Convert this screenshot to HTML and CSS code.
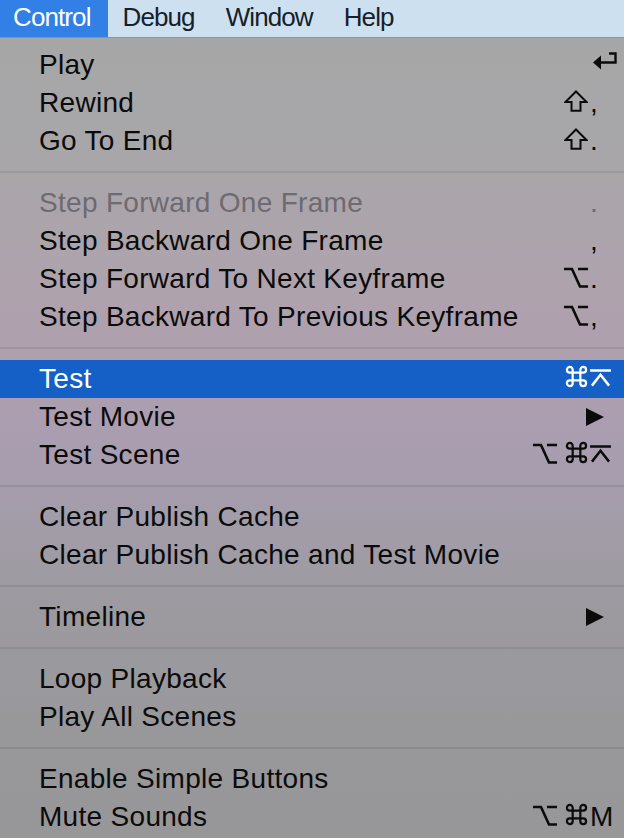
FILE: index.html
```html
<!DOCTYPE html>
<html>
	<head>
		<title>Control menu</title>
		<link rel="stylesheet" href="styles.css">
	</head>
	<body>
	<svg class="defs" width="0" height="0">
		<symbol id="ret" viewBox="0 0 24 18"><path d="M16 1.5 H22.5 V10.5 H6" fill="none" stroke="currentColor" stroke-width="2.4"/><path d="M0 10.5 L8 3.5 V17.5 Z" fill="currentColor"/></symbol>
		<symbol id="shift" viewBox="0 0 24 22"><path d="M12 1.5 L22.5 12 H16.5 V20.8 H7.5 V12 H1.5 Z" fill="none" stroke="currentColor" stroke-width="2" stroke-linejoin="miter"/></symbol>
		<symbol id="opt" viewBox="0 0 24 21"><path d="M0 2 H8 L16 19.5 H24 M14 2 H24" fill="none" stroke="currentColor" stroke-width="2.6"/></symbol>
		<symbol id="cmd" viewBox="0 0 24 24"><path d="M8 8 H16 V16 H8 Z M8 8 V5 A3 3 0 1 0 5 8 H8 M16 8 V5 A3 3 0 1 1 19 8 H16 M16 16 V19 A3 3 0 1 0 19 16 H16 M8 16 V19 A3 3 0 1 1 5 16 H8" fill="none" stroke="currentColor" stroke-width="2.3"/></symbol>
		<symbol id="enter" viewBox="0 0 22 20"><path d="M0 1.5 H22 M2 17.5 L11 6 L20 17.5" fill="none" stroke="currentColor" stroke-width="2.6"/></symbol>
		<symbol id="arrow" viewBox="0 0 18 18"><path d="M0 0 L18 9 L0 18 Z" fill="currentColor"/></symbol>
	</svg>

	<div class="menubar">
		<span class="top-item active">Control</span>
		<span class="top-item">Debug</span>
		<span class="top-item">Window</span>
		<span class="top-item">Help</span>
	</div>

	<div class="menu">
		<div class="row"><span class="label">Play</span><span class="mods"></span><span class="key"><svg class="i-ret"><use href="#ret"/></svg></span></div>
		<div class="row"><span class="label">Rewind</span><span class="mods"><svg class="i-shift"><use href="#shift"/></svg></span><span class="key">,</span></div>
		<div class="row"><span class="label">Go To End</span><span class="mods"><svg class="i-shift"><use href="#shift"/></svg></span><span class="key">.</span></div>
		<div class="sep"></div>
		<div class="row disabled"><span class="label">Step Forward One Frame</span><span class="mods"></span><span class="key">.</span></div>
		<div class="row"><span class="label">Step Backward One Frame</span><span class="mods"></span><span class="key">,</span></div>
		<div class="row"><span class="label">Step Forward To Next Keyframe</span><span class="mods"><svg class="i-opt"><use href="#opt"/></svg></span><span class="key">.</span></div>
		<div class="row"><span class="label">Step Backward To Previous Keyframe</span><span class="mods"><svg class="i-opt"><use href="#opt"/></svg></span><span class="key">,</span></div>
		<div class="sep"></div>
		<div class="row selected"><span class="label">Test</span><span class="mods"><svg class="i-cmd"><use href="#cmd"/></svg></span><span class="key"><svg class="i-enter"><use href="#enter"/></svg></span></div>
		<div class="row"><span class="label">Test Movie</span><span class="mods"></span><span class="key"><svg class="i-arrow"><use href="#arrow"/></svg></span></div>
		<div class="row"><span class="label">Test Scene</span><span class="mods"><svg class="i-opt"><use href="#opt"/></svg><svg class="i-cmd"><use href="#cmd"/></svg></span><span class="key"><svg class="i-enter"><use href="#enter"/></svg></span></div>
		<div class="sep"></div>
		<div class="row"><span class="label">Clear Publish Cache</span><span class="mods"></span><span class="key"></span></div>
		<div class="row"><span class="label">Clear Publish Cache and Test Movie</span><span class="mods"></span><span class="key"></span></div>
		<div class="sep"></div>
		<div class="row"><span class="label">Timeline</span><span class="mods"></span><span class="key"><svg class="i-arrow"><use href="#arrow"/></svg></span></div>
		<div class="sep"></div>
		<div class="row"><span class="label">Loop Playback</span><span class="mods"></span><span class="key"></span></div>
		<div class="row"><span class="label">Play All Scenes</span><span class="mods"></span><span class="key"></span></div>
		<div class="sep"></div>
		<div class="row"><span class="label">Enable Simple Buttons</span><span class="mods"></span><span class="key"></span></div>
		<div class="row"><span class="label">Mute Sounds</span><span class="mods"><svg class="i-opt"><use href="#opt"/></svg><svg class="i-cmd"><use href="#cmd"/></svg></span><span class="key">M</span></div>
	</div>
	</body>
</html>
```

FILE: styles.css
```css
body{
	margin:0;
	height:838px;
	overflow:hidden;
	font-family:"Liberation Sans", Arial, sans-serif;
	background-color:#97979a;
}
.defs{
	position:absolute;
	width:0;
	height:0;
}
.menubar{
	display:flex;
	height:37px;
	background-color:#cde0ef;
	border-bottom:1px solid #8e949a;
	font-size:26px;
	letter-spacing:-0.9px;
	line-height:35px;
	color:#15202b;
}
.top-item{
	padding:0 16px 0 15px;
}
.top-item.active{
	background-color:#3280e6;
	color:#fff;
	padding-left:13px;
	padding-right:17px;
}
.menu{
	padding-top:8px;
	min-height:792px;
	background:linear-gradient(to bottom, #a6a6a7 0px, #a8a6a9 120px, #aea3ad 240px, #ae9fae 330px, #a99db0 410px, #a29ca8 490px, #9c9a9f 570px, #98989b 700px, #97979a 100%);
	color:#0b0b0b;
	font-size:28px;
	letter-spacing:0.3px;
}
.row{
	display:flex;
	align-items:center;
	height:38px;
	padding-left:39px;
}
.row .label{
	flex:1;
	white-space:nowrap;
}
.mods{
	display:flex;
	align-items:center;
	gap:8px;
	margin-right:2px;
}
.key{
	width:34px;
	display:flex;
	align-items:center;
	letter-spacing:0;
}
.row.disabled{
	color:#6e6a71;
}
.row.selected{
	background-color:#1560c6;
	color:#fff;
}
.sep{
	height:24px;
	display:flex;
	align-items:center;
}
.sep::after{
	content:"";
	flex:1;
	height:2px;
	background-color:rgba(0,0,0,0.08);
}
.i-ret{
	width:24px;
	height:18px;
	margin:0 0 8px 3px;
}
.i-shift{
	width:24px;
	height:22px;
	margin-bottom:4px;
}
.i-opt{
	width:24px;
	height:21px;
	margin-bottom:3px;
}
.i-cmd{
	width:23px;
	height:23px;
	margin-bottom:6px;
}
.i-enter{
	width:21px;
	height:19px;
	margin-bottom:2px;
}
.i-arrow{
	width:18px;
	height:18px;
	margin-left:-4px;
}
```
